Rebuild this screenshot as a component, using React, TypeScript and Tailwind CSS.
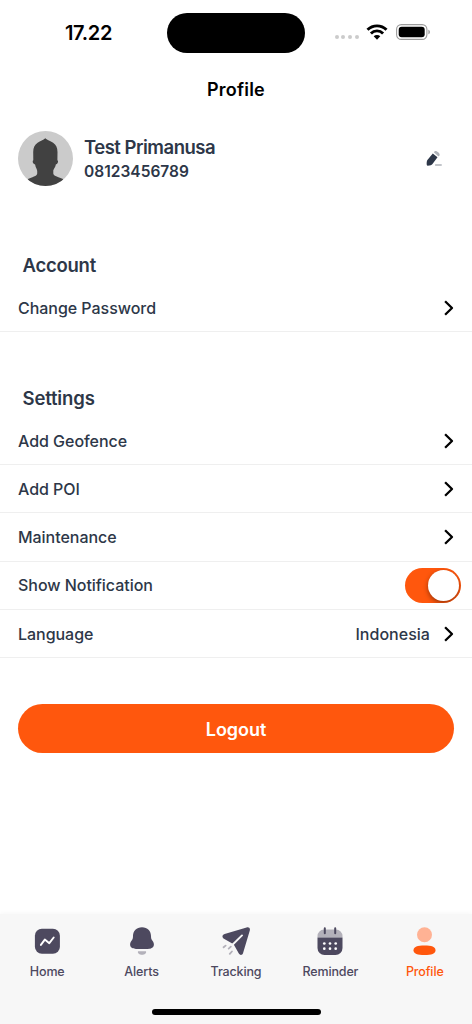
import React, { useState } from "react";

function StatusBar() {
  return (
    <div className="relative flex h-[65px] shrink-0 items-center">
      <span className="ml-[65px] w-[60px] text-[20px] leading-[24px] font-semibold tracking-[-0.35px] text-black">17.22</span>
      <div className="ml-[42px] h-10 w-[138px] rounded-full bg-black" />
      <div className="mt-[9px] ml-[29.7px] flex gap-[2.7px]">
        {[0, 1, 2, 3].map((i) => (
          <span key={i} className="size-1 rounded-full bg-[#cbcbcb]" />
        ))}
      </div>
      <svg className="mb-[1.5px] ml-[7.5px] h-4 w-[22px]" viewBox="0 0 22 16" fill="none" stroke="#000" strokeWidth="2.9">
        <path d="M1.5 5.8a13.4 13.4 0 0 1 19 0" />
        <path d="M4.9 9.4a8.6 8.6 0 0 1 12.2 0" />
        <path d="M11 15.7l3.3-3.4a4.7 4.7 0 0 0-6.6 0z" fill="#000" stroke="none" />
      </svg>
      <svg className="mb-[1px] ml-[8.2px] h-4 w-[35px]" viewBox="0 0 35 16">
        <rect x=".6" y=".6" width="30.3" height="14.8" rx="4.7" fill="#fff" stroke="#9c9c9c" strokeWidth="1.1" />
        <rect x="2.7" y="2.7" width="26" height="10.6" rx="3" />
        <path d="M32.4 5.7v4.6c2-.7 2-3.9 0-4.6z" fill="#999" />
      </svg>
    </div>
  );
}

function Chevron() {
  return (
    <svg className="h-4 w-[10px] shrink-0" viewBox="0 0 10 16" fill="none" stroke="#000" strokeWidth="2.3">
      <path d="M1.1 1.2 8 8l-6.9 6.8" strokeLinejoin="round" />
    </svg>
  );
}

function Row({ label, children }: { label: string; children?: React.ReactNode }) {
  return (
    <div className="flex h-[48.3px] items-center justify-between border-b border-[#efefef] px-[18px]">
      <span className="text-[16px] leading-[20px] font-medium tracking-[-0.04px] text-[#2d3748]">{label}</span>
      {children ?? <Chevron />}
    </div>
  );
}

function Toggle() {
  const [on, setOn] = useState(true);
  return (
    <button
      role="switch"
      aria-checked={on}
      aria-label="Show Notification"
      onClick={() => setOn(!on)}
      className={`-mr-[7px] flex h-[35px] w-[56px] items-center overflow-hidden rounded-full px-[2px] ${on ? "justify-end bg-[#ff570d]" : "justify-start bg-gray-300"}`}
    >
      <span className="size-[31px] rounded-full bg-white shadow-[0_2px_5px_rgba(0,0,0,0.4)]" />
    </button>
  );
}

function HomeIcon() {
  return (
    <svg className="size-7" viewBox="0 0 28 28" fill="none">
      <rect x="1.9" y="1.7" width="25" height="25" rx="7" fill="#4d495f" />
      <path d="M7.9 17.9 11.8 12.6 16.3 16.2 20.7 10.5" stroke="#fff" strokeWidth="1.9" strokeLinecap="round" strokeLinejoin="round" />
    </svg>
  );
}

function BellIcon() {
  return (
    <svg className="size-7" viewBox="0 0 28 28">
      <path d="M14 .3c-5.5 0-9 3.8-9 8.8 0 2-.2 3-1.3 4.4C2.6 15 2.1 16 2.1 17.5c0 3 2.7 4.4 6 4.4h11.8c3.3 0 6-1.4 6-4.4 0-1.5-.5-2.5-1.6-4-1.1-1.4-1.3-2.4-1.3-4.4 0-5-3.5-8.8-9-8.8z" fill="#4d495f" />
      <path d="M10 24.3h8c.7 2-1.5 3.5-4 3.5s-4.7-1.5-4-3.5z" fill="#b3b1ba" />
    </svg>
  );
}

function TrackingIcon() {
  return (
    <svg className="size-7" viewBox="0 0 28 28" fill="none">
      <path d="M2.6 7.1 24.6.5C26.8-.1 28.4 1.4 27.8 3.4L21 26.3C20.4 28.3 18 28.5 17 26.8L11.6 17.2 1.5 11.4C-.3 10.3.3 7.8 2.6 7.1Z" fill="#4d495f" />
      <path d="m10.5 17.7 9.5-9.3" stroke="#f7f7f7" strokeWidth="1.9" strokeLinecap="round" />
      <path d="m1.6 20.3 2-1.7M6.7 21.6l2.1-1.9M7.8 26.9l2.1-2.4" stroke="#b3b1ba" strokeWidth="1.8" strokeLinecap="round" />
    </svg>
  );
}

function CalendarIcon() {
  return (
    <svg className="size-7" viewBox="0 0 28 28" fill="none">
      <path d="M1.5 10.5V9A6.5 6.5 0 0 1 8 2.5h12A6.5 6.5 0 0 1 26.5 9v1.5z" fill="#b3b1ba" />
      <path d="M1.5 10.4h25V21a7 7 0 0 1-7 7h-11a7 7 0 0 1-7-7z" fill="#4d495f" />
      <path d="M8.8 1.3v5M19.2 1.3v5" stroke="#4d495f" strokeWidth="2" strokeLinecap="round" />
      <g fill="#fff">
        {[8.3, 14, 19.7].map((x) => (
          <React.Fragment key={x}>
            <circle cx={x} cy="16.5" r="1.35" />
            <circle cx={x} cy="21.7" r="1.35" />
          </React.Fragment>
        ))}
      </g>
    </svg>
  );
}

function ProfileIcon() {
  return (
    <svg className="size-7" viewBox="0 0 28 28">
      <circle cx="13.5" cy="7.7" r="7.5" fill="#ffb294" />
      <path d="M2.5 23.3c0-3.5 4-4.8 11-4.8s11 1.3 11 4.8-4 4.7-11 4.7-11-1.2-11-4.7z" fill="#ff570d" />
    </svg>
  );
}

const tabs = [
  { label: "Home", icon: HomeIcon },
  { label: "Alerts", icon: BellIcon },
  { label: "Tracking", icon: TrackingIcon },
  { label: "Reminder", icon: CalendarIcon },
  { label: "Profile", icon: ProfileIcon, active: true },
];

export default function App() {
  return (
    <div className="flex h-[1024px] w-[472px] flex-col overflow-hidden bg-white font-['Inter','Liberation_Sans',sans-serif]">
      <StatusBar />
      <h1 className="h-12 shrink-0 text-center text-[18px] leading-[49px] font-semibold tracking-[0.2px] text-black">Profile</h1>

      <section className="mt-[18px] flex h-[55px] shrink-0 items-center pr-[30px] pl-[18px]">
        <svg className="size-[55px] shrink-0 rounded-full" viewBox="0 0 55 55">
          <rect width="55" height="55" fill="#cbcbcb" />
          <path d="M27.3 7.2c2 1.7 5 2.7 7.8 4.5 3 2 4.4 5 4.4 9.3l-.1 8.2c1.2.6.8 3.6-1.6 4.3-.5 3.500-2.500 4.500-2.500 6.500v2.500c.2 2 2.500 2.800 9.700 5.500l3 8.500H7l3-8.500c7.200-2.700 9-3.500 9.200-5.500V40c0-2-1.600-3-2.100-6.500-2.400-.7-3-3.700-1.800-4.300L15.200 21c0-4.300 1.400-7.300 4.400-9.300 2.800-1.800 5.700-2.800 7.700-4.500z" fill="#414141" />
        </svg>
        <div className="mt-px ml-[11px] flex flex-1 flex-col">
          <span className="text-[18.5px] leading-[24px] font-semibold tracking-[-0.5px] text-[#2d3748]">Test Primanusa</span>
          <span className="text-[15.5px] leading-[25px] font-semibold tracking-[0.02px] text-[#2d3748]">08123456789</span>
        </div>
        <svg className="mb-px h-[16px] w-[16px]" viewBox="0 0 16 16" fill="none">
          <path d="M6.8 3.4 11.5 7.3 6.3 14.3C5.6 15.2 4.5 15.7 1.6 15.7 1 15.7.7 15.3.7 14.6.6 12.5.8 11 1.4 10Z" fill="#2d3748" />
          <path d="m7.8 2.3.9-1c1.3-1.3 5.9 2.3 4.8 4l-1 1.2z" fill="#aeb2b9" />
          <path d="M9.6 15h5.6" stroke="#aeb2b9" strokeWidth="1.5" strokeLinecap="round" />
        </svg>
      </section>

      <section className="mt-[65px] shrink-0">
        <h2 className="h-[33px] pl-[22.5px] text-[18.5px] leading-[28px] font-semibold tracking-[-0.25px] text-[#2d3748]">Account</h2>
        <Row label="Change Password" />
      </section>

      <section className="mt-[51.6px] shrink-0">
        <h2 className="h-[33px] pl-[22.5px] text-[18.5px] leading-[28px] font-semibold tracking-[-0.15px] text-[#2d3748]">Settings</h2>
        <Row label="Add Geofence" />
        <Row label="Add POI" />
        <Row label="Maintenance" />
        <Row label="Show Notification">
          <Toggle />
        </Row>
        <Row label="Language">
          <div className="flex items-center gap-[14px]">
            <span className="text-[16px] leading-[20px] font-medium tracking-[0.03px] text-[#2d3748]">Indonesia</span>
            <Chevron />
          </div>
        </Row>
      </section>

      <button className="mx-[18px] mt-[46px] h-[49px] shrink-0 rounded-full bg-[#ff570d] pt-px text-[18px] font-semibold tracking-[-0.05px] text-white">Logout</button>

      <nav className="mt-auto flex h-[110px] shrink-0 flex-col justify-between bg-[#f7f7f7] pb-[9px] shadow-[0_-1px_5px_rgba(0,0,0,0.04)]">
        <div className="grid grid-cols-5 pt-[13px]">
          {tabs.map(({ label, icon: Icon, active }) => (
            <button key={label} className={`flex flex-col items-center gap-[8px] text-[12.5px] leading-[18px] font-medium tracking-[-0.14px] ${active ? "text-[#ff570d]" : "text-[#4d495f]"}`}>
              <Icon />
              <span>{label}</span>
            </button>
          ))}
        </div>
        <div className="mx-auto h-[6px] w-[169px] rounded-full bg-black" />
      </nav>
    </div>
  );
}
